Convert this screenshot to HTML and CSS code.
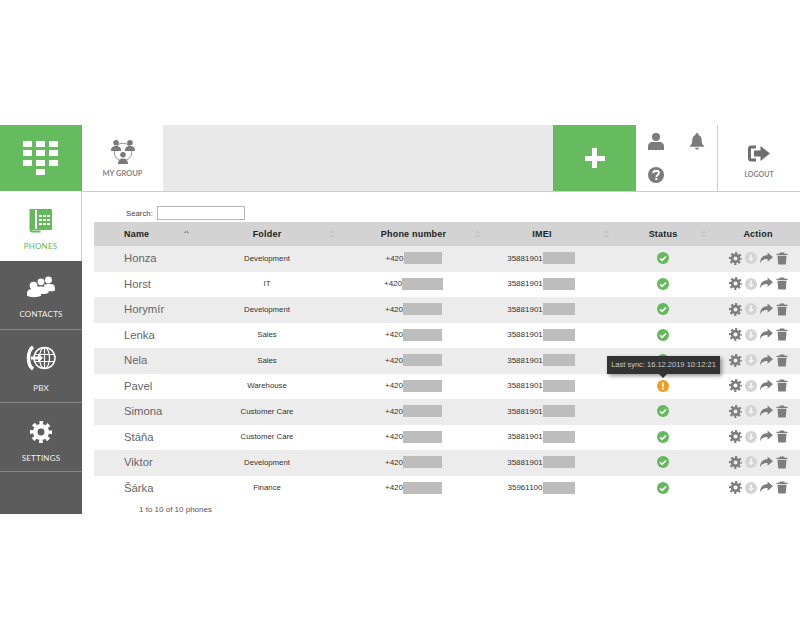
FILE: index.html
```html
<!DOCTYPE html>
<html lang="en">
<head>
<meta charset="utf-8">
<title>Phones</title>
<link rel="stylesheet" href="styles.css">
</head>
<body>
<svg class="defs" width="0" height="0" aria-hidden="true">
  <symbol id="gear" viewBox="0 0 24 24">
    <circle cx="12" cy="12" r="10" fill="none" stroke="currentColor" stroke-width="4" stroke-dasharray="4 3.854" stroke-dashoffset="2"/>
    <circle cx="12" cy="12" r="6.300" fill="none" stroke="currentColor" stroke-width="5"/>
  </symbol>
  <symbol id="ok" viewBox="0 0 24 24">
    <circle cx="12" cy="12" r="12" fill="#63b95c"/>
    <path d="M6 12.500l4.300 4.300L18 9" fill="none" stroke="#fff" stroke-width="3.400"/>
  </symbol>
  <symbol id="warn" viewBox="0 0 24 24">
    <circle cx="12" cy="12" r="12" fill="#f39c1f"/>
    <rect x="10.200" y="5" width="3.600" height="8.500" fill="#fff"/>
    <rect x="10.200" y="15.500" width="3.600" height="3.600" fill="#fff"/>
  </symbol>
  <symbol id="down" viewBox="0 0 24 24">
    <circle cx="12" cy="12" r="12" fill="#d4d4d4"/>
    <path d="M10 5h4v7h4l-6 7-6-7h4z" fill="#f2f2f2"/>
  </symbol>
  <symbol id="share" viewBox="0 0 24 24">
    <path d="M24 9.500L14 1v5C6 6 0 10 0 21c3-6 7-8 14-8v5z" fill="currentColor"/>
  </symbol>
  <symbol id="trash" viewBox="0 0 24 24">
    <path d="M8 0h8l1.500 2.500H23V5H1V2.500h5.500zM3 6.500h18L19.500 24h-15z" fill="currentColor"/>
  </symbol>
</svg>

<div class="app">
  <nav class="side">
    <div class="logo">
      <div class="keys">
        <i></i><i></i><i></i><i></i><i></i><i></i><i></i><i></i><i></i><i class="key-zero"></i>
      </div>
    </div>
    <a class="nav nav-phones">
      <svg width="24" height="25" viewBox="0 0 24 25">
        <rect x="2" y="1" width="21" height="21" rx="1" fill="#63b95c"/>
        <path d="M1.500 1v20.500a2 2 0 0 0 2 2h8" fill="none" stroke="#63b95c" stroke-width="2"/>
        <rect x="6" y="2" width="2" height="19" fill="#fff"/>
        <g fill="#fff">
          <rect x="10" y="7" width="3" height="2"/><rect x="14" y="7" width="3" height="2"/><rect x="18" y="7" width="3" height="2"/>
          <rect x="10" y="11" width="3" height="2"/><rect x="14" y="11" width="3" height="2"/><rect x="18" y="11" width="3" height="2"/>
          <rect x="10" y="15" width="3" height="2"/><rect x="14" y="15" width="3" height="2"/><rect x="18" y="15" width="3" height="2"/>
        </g>
      </svg>
      <span>PHONES</span>
    </a>
    <a class="nav nav-contacts">
      <svg width="28" height="22" viewBox="0 0 30 23" fill="#fff">
        <circle cx="23" cy="4" r="3.700"/><path d="M18 9.500c1-1.500 9-1.500 10.500-.5 1 .7 1.500 2.500 1.500 5.500 0 1-1 1.500-2 1.500h-7z"/>
        <circle cx="15" cy="6" r="3.700"/><path d="M9 12c1-1.500 11-1.500 12.500 0 1 1 1.500 3 1.500 6l-4 1H9z"/>
        <circle cx="7" cy="10" r="4.200"/><path d="M0 19c0-3 1-4 2-4.500 2-1 8-1 10 0 1.500.7 3 2 3 4.500v2c-3 2-12 2-15 0z"/>
      </svg>
      <span>CONTACTS</span>
    </a>
    <a class="nav nav-pbx">
      <svg width="31" height="26" viewBox="0 0 31 26" fill="none" stroke="#fff">
        <path d="M7 2C1 6 1 20 7 24" stroke-width="3.500"/>
        <circle cx="18.500" cy="13" r="10.500" stroke-width="1.500"/>
        <ellipse cx="18.500" cy="13" rx="5" ry="10.500" stroke-width="1.200"/>
        <path d="M18.500 2.500v21M8.500 9.500h20M8.500 16.500h20" stroke-width="1.200"/>
        <path d="M5 13h8" stroke-width="3"/>
        <path d="M12 8.500l5 4.500-5 4.500z" fill="#fff" stroke="none"/>
      </svg>
      <span>PBX</span>
    </a>
    <a class="nav nav-settings">
      <svg class="gear-big" width="22" height="22"><use href="#gear"/></svg>
      <span>SETTINGS</span>
    </a>
    <div class="side-rest"></div>
  </nav>

  <div class="main">
    <header class="top">
      <div class="group">
        <svg width="28" height="26" viewBox="0 0 28 28" fill="#7a7a7a">
          <circle cx="14" cy="14" r="9.500" fill="none" stroke="#8a8a8a" stroke-width="1"/>
          <circle cx="6.500" cy="4" r="3"/><path d="M1 13c0-4 2-5.500 5.500-5.500S12 9 12 13z"/>
          <circle cx="21.500" cy="4" r="3"/><path d="M16 13c0-4 2-5.500 5.500-5.500S27 9 27 13z"/>
          <circle cx="14" cy="17" r="3"/><path d="M8.500 27c0-4 2-6 5.500-6s5.500 2 5.500 6z"/>
        </svg>
        <span>MY GROUP</span>
      </div>
      <div class="filler"></div>
      <button class="add" type="button" aria-label="Add"></button>
      <div class="tools">
        <svg class="t-user" width="16" height="17" viewBox="0 0 16 17" fill="#7b7b7b">
          <circle cx="8" cy="4" r="4"/><path d="M0 17v-3.500C0 10.500 2 9 4 9h8c2 0 4 1.500 4 4.500V17z"/>
        </svg>
        <svg class="t-bell" width="16" height="17" viewBox="0 0 16 18" fill="#7b7b7b">
          <path d="M8 0a1.500 1.500 0 0 1 1.500 2C12 2.800 13 5 13 8c0 3 1 4.500 3 6.500H0C2 12.500 3 11 3 8c0-3 1-5.200 3.500-6A1.500 1.500 0 0 1 8 0z"/>
          <path d="M6 15.500h4a2 2 0 0 1-4 0z"/>
        </svg>
        <svg class="t-help" width="16" height="16" viewBox="0 0 16 16">
          <circle cx="8" cy="8" r="8" fill="#7b7b7b"/>
          <path d="M5.200 6.200C5.400 4.500 6.500 3.800 8 3.800c1.700 0 2.900 1 2.900 2.300 0 2-2.500 2-2.500 3.800" fill="none" stroke="#fff" stroke-width="1.900"/>
          <rect x="7.300" y="10.900" width="2.100" height="2.100" fill="#fff"/>
        </svg>
      </div>
      <div class="logout">
        <svg width="22" height="17" viewBox="0 0 22 17">
          <path d="M8 2H3a1.500 1.500 0 0 0-1.500 1.500v10A1.500 1.500 0 0 0 3 15h5" fill="none" stroke="#6f6f6f" stroke-width="3"/>
          <path d="M6 5.500h6.500V1L22 8.500 12.500 16v-4.500H6z" fill="#6f6f6f"/>
        </svg>
        <span>LOGOUT</span>
      </div>
    </header>

    <section class="content">
      <div class="search">
        <label for="q">Search:</label>
        <input id="q" type="text">
      </div>
      <div class="table">
        <div class="row head">
          <div class="c-name sort sort-up">Name</div>
          <div class="c-folder sort">Folder</div>
          <div class="c-phone sort">Phone number</div>
          <div class="c-imei sort">IMEI</div>
          <div class="c-status sort">Status</div>
          <div class="c-action">Action</div>
        </div>

        <div class="row"><div class="c-name">Honza</div><div class="c-folder">Development</div><div class="c-phone">+420<b class="mask m38"></b></div><div class="c-imei">35881901<b class="mask m32"></b></div><div class="c-status"><svg width="12" height="12"><use href="#ok"/></svg></div><div class="c-action"><svg class="gr" width="13" height="13"><use href="#gear"/></svg><svg width="12" height="12"><use href="#down"/></svg><svg class="gr" width="13" height="13"><use href="#share"/></svg><svg class="gr" width="12" height="13"><use href="#trash"/></svg></div></div>
        <div class="row"><div class="c-name">Horst</div><div class="c-folder">IT</div><div class="c-phone">+420<b class="mask m41"></b></div><div class="c-imei">35881901<b class="mask m32"></b></div><div class="c-status"><svg width="12" height="12"><use href="#ok"/></svg></div><div class="c-action"><svg class="gr" width="13" height="13"><use href="#gear"/></svg><svg width="12" height="12"><use href="#down"/></svg><svg class="gr" width="13" height="13"><use href="#share"/></svg><svg class="gr" width="12" height="13"><use href="#trash"/></svg></div></div>
        <div class="row"><div class="c-name">Horymír</div><div class="c-folder">Development</div><div class="c-phone">+420<b class="mask m39"></b></div><div class="c-imei">35881901<b class="mask m32"></b></div><div class="c-status"><svg width="12" height="12"><use href="#ok"/></svg></div><div class="c-action"><svg class="gr" width="13" height="13"><use href="#gear"/></svg><svg width="12" height="12"><use href="#down"/></svg><svg class="gr" width="13" height="13"><use href="#share"/></svg><svg class="gr" width="12" height="13"><use href="#trash"/></svg></div></div>
        <div class="row"><div class="c-name">Lenka</div><div class="c-folder">Sales</div><div class="c-phone">+420<b class="mask m39"></b></div><div class="c-imei">35881901<b class="mask m32"></b></div><div class="c-status"><svg width="12" height="12"><use href="#ok"/></svg></div><div class="c-action"><svg class="gr" width="13" height="13"><use href="#gear"/></svg><svg width="12" height="12"><use href="#down"/></svg><svg class="gr" width="13" height="13"><use href="#share"/></svg><svg class="gr" width="12" height="13"><use href="#trash"/></svg></div></div>
        <div class="row"><div class="c-name">Nela</div><div class="c-folder">Sales</div><div class="c-phone">+420<b class="mask m39"></b></div><div class="c-imei">35881901<b class="mask m32"></b></div><div class="c-status"><svg width="12" height="12"><use href="#ok"/></svg></div><div class="c-action"><svg class="gr" width="13" height="13"><use href="#gear"/></svg><svg width="12" height="12"><use href="#down"/></svg><svg class="gr" width="13" height="13"><use href="#share"/></svg><svg class="gr" width="12" height="13"><use href="#trash"/></svg></div></div>
        <div class="row"><div class="c-name">Pavel</div><div class="c-folder">Warehouse</div><div class="c-phone">+420<b class="mask m39"></b></div><div class="c-imei">35881901<b class="mask m32"></b></div><div class="c-status has-tip"><span class="tip">Last sync: 16.12.2019 10:12:21</span><svg width="12" height="12"><use href="#warn"/></svg></div><div class="c-action"><svg class="gr" width="13" height="13"><use href="#gear"/></svg><svg width="12" height="12"><use href="#down"/></svg><svg class="gr" width="13" height="13"><use href="#share"/></svg><svg class="gr" width="12" height="13"><use href="#trash"/></svg></div></div>
        <div class="row"><div class="c-name">Simona</div><div class="c-folder">Customer Care</div><div class="c-phone">+420<b class="mask m39"></b></div><div class="c-imei">35881901<b class="mask m32"></b></div><div class="c-status"><svg width="12" height="12"><use href="#ok"/></svg></div><div class="c-action"><svg class="gr" width="13" height="13"><use href="#gear"/></svg><svg width="12" height="12"><use href="#down"/></svg><svg class="gr" width="13" height="13"><use href="#share"/></svg><svg class="gr" width="12" height="13"><use href="#trash"/></svg></div></div>
        <div class="row"><div class="c-name">Stáňa</div><div class="c-folder">Customer Care</div><div class="c-phone">+420<b class="mask m39"></b></div><div class="c-imei">35881901<b class="mask m32"></b></div><div class="c-status"><svg width="12" height="12"><use href="#ok"/></svg></div><div class="c-action"><svg class="gr" width="13" height="13"><use href="#gear"/></svg><svg width="12" height="12"><use href="#down"/></svg><svg class="gr" width="13" height="13"><use href="#share"/></svg><svg class="gr" width="12" height="13"><use href="#trash"/></svg></div></div>
        <div class="row"><div class="c-name">Viktor</div><div class="c-folder">Development</div><div class="c-phone">+420<b class="mask m39"></b></div><div class="c-imei">35881901<b class="mask m32"></b></div><div class="c-status"><svg width="12" height="12"><use href="#ok"/></svg></div><div class="c-action"><svg class="gr" width="13" height="13"><use href="#gear"/></svg><svg width="12" height="12"><use href="#down"/></svg><svg class="gr" width="13" height="13"><use href="#share"/></svg><svg class="gr" width="12" height="13"><use href="#trash"/></svg></div></div>
        <div class="row"><div class="c-name">Šárka</div><div class="c-folder">Finance</div><div class="c-phone">+420<b class="mask m39"></b></div><div class="c-imei">35961100<b class="mask m32"></b></div><div class="c-status"><svg width="12" height="12"><use href="#ok"/></svg></div><div class="c-action"><svg class="gr" width="13" height="13"><use href="#gear"/></svg><svg width="12" height="12"><use href="#down"/></svg><svg class="gr" width="13" height="13"><use href="#share"/></svg><svg class="gr" width="12" height="13"><use href="#trash"/></svg></div></div>
      </div>
      <p class="info">1 to 10 of 10 phones</p>
    </section>
  </div>
</div>
</body>
</html>
```

FILE: styles.css
```css
* { box-sizing: border-box; }
html, body { margin: 0; padding: 0; background: #fff; }
body { font-family: "Liberation Sans", Arial, sans-serif; color: #333; }
.defs { position: absolute; }
svg { display: block; flex: none; }

.app { display: flex; height: 389px; margin-top: 125px; }

/* sidebar */
.side { width: 82px; flex: none; display: flex; flex-direction: column; background: #5c5c5c; }
.logo { height: 66px; padding-right: 1px; background: #66bb5e; display: flex; align-items: center; justify-content: center; }
.keys { display: grid; grid-template-columns: repeat(3, 9px); grid-auto-rows: 6px; gap: 3.500px 4px; }
.keys i { background: #fff; display: block; }
.keys .key-zero { grid-column: 2; }
.nav { display: flex; flex-direction: column; align-items: center; font-family: Lato, sans-serif; font-size: 8px; letter-spacing: .2px; color: #f2f2f2; border-bottom: 1px solid #858585; }
.nav-phones { height: 70px; padding-top: 17px; gap: 8px; background: #fff; color: #63b95c; border-bottom: 0; border-right: 1px solid #ccc; }
.nav-contacts { height: 69px; padding-top: 15px; gap: 11px; }
.nav-pbx { height: 73px; padding-top: 15px; gap: 12px; }
.nav-settings { height: 69px; padding-top: 18px; gap: 10px; }
.gear-big { color: #fff; }
.side-rest { flex: 1; }

/* top bar */
.main { flex: 1; display: flex; flex-direction: column; min-width: 0; }
.top { height: 67px; flex: none; display: flex; border-bottom: 1px solid #ccc; }
.group { width: 81px; display: flex; flex-direction: column; align-items: center; padding-top: 14px; gap: 4px; font-family: Lato, sans-serif; font-size: 7.500px; font-weight: 700; color: #858585; }
.filler { flex: 1; background: #e9e9e9; }
.add { width: 83px; border: 0; padding: 0; background-color: #66bb5e; background-image: linear-gradient(#fff, #fff), linear-gradient(#fff, #fff); background-size: 20px 5px, 5px 20px; background-position: center; background-repeat: no-repeat; }
.tools { width: 81px; display: grid; grid-template-columns: 1fr 1fr; grid-template-rows: 1fr 1fr; padding-left: 12px; justify-items: start; align-items: center; }
.t-bell { margin-left: 6.500px; }
.logout { width: 83px; border-left: 1px solid #ccc; display: flex; flex-direction: column; align-items: center; padding-top: 20px; gap: 8px; font-family: Lato, sans-serif; font-size: 7px; font-weight: 700; color: #858585; }

/* table */
.content { flex: 1; padding-left: 12px; }
.search { height: 30px; display: flex; align-items: flex-end; padding: 0 0 2px 32px; gap: 4px; font-size: 7.800px; line-height: 13px; color: #444; }
.search input { width: 88px; height: 14px; margin: 0; padding: 0 2px; border: 1px solid #b5b5b5; background: #fff; }
.row { display: grid; grid-template-columns: 102px 146px 145px 129px 97px 87px; height: 25.550px; padding-bottom: 1.500px; align-items: center; text-align: center; font-size: 7.800px; color: #333; }
.row:nth-child(even) { background: #ececec; }
.head { height: 24px; padding-bottom: 0; background: #d3d3d3 !important; font-size: 9px; font-weight: 700; letter-spacing: .2px; color: #222; }
.c-name { text-align: left; padding-left: 30px; font-size: 11.300px; color: #666; }
.head .c-name { font-size: 9px; color: #222; }
.c-folder { padding-right: 4px; }
.c-phone { padding-right: 2px; display: flex; justify-content: center; align-items: center; font-size: 8px; }
.c-imei { padding-right: 21px; display: flex; justify-content: center; align-items: center; font-size: 8px; }
.c-status { padding-right: 3px; display: flex; justify-content: center; }
.c-action { padding-left: 3px; display: flex; justify-content: center; align-items: center; gap: 3px; color: #777; }
.head .c-action { color: #222; }
.head .c-phone, .head .c-imei { display: block; font-size: 9px; }
.head .c-imei { padding-right: 19px; }
.gr { color: #7d7d7d; }
.mask { display: inline-block; height: 12px; background: #bdbdbd; }
.m38 { width: 38px; } .m39 { width: 39px; } .m41 { width: 41px; } .m32 { width: 32px; }
.sort { position: relative; }
.sort::after { content: ""; position: absolute; right: 7px; top: 50%; margin-top: -4px; width: 5px; height: 8px; background:
  linear-gradient(135deg, transparent 50%, #c4c4c4 50%) 0 0 / 2.500px 3px no-repeat,
  linear-gradient(225deg, transparent 50%, #c4c4c4 50%) 100% 0 / 2.500px 3px no-repeat,
  linear-gradient(45deg, transparent 50%, #c4c4c4 50%) 0 100% / 2.500px 3px no-repeat,
  linear-gradient(315deg, transparent 50%, #c4c4c4 50%) 100% 100% / 2.500px 3px no-repeat; }
.sort-up::after { background:
  linear-gradient(135deg, transparent 50%, #999 50%) 0 0 / 2.500px 3px no-repeat,
  linear-gradient(225deg, transparent 50%, #999 50%) 100% 0 / 2.500px 3px no-repeat; }
.has-tip { position: relative; }
.tip { position: absolute; left: -9px; bottom: 17.500px; width: 113px; height: 18px; line-height: 18px; text-align: center; background: #333; color: #ccc; font-size: 7.500px; white-space: nowrap; box-shadow: 2px 2px 4px rgba(0,0,0,.4); }
.tip::after { content: ""; position: absolute; left: 52px; top: 18px; border: 4px solid transparent; border-top-color: #333; border-bottom: 0; }
.info { margin: 4px 0 0 45px; font-size: 8px; color: #555; }
```
